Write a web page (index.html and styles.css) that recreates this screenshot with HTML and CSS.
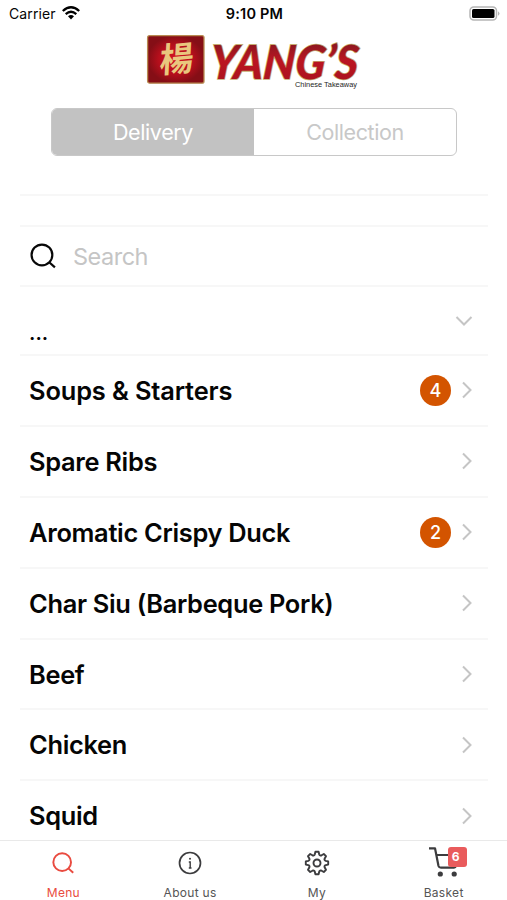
FILE: index.html
```html
<!DOCTYPE html>
<html lang="en">
<head>
<meta charset="utf-8">
<title>Yang's Chinese Takeaway</title>
<link rel="stylesheet" href="styles.css">
</head>
<body>
<svg class="defs" aria-hidden="true">
  <symbol id="chevron" viewBox="0 0 12 18"><path d="M2 1.5 9.5 9 2 16.5"/></symbol>
  <symbol id="search" viewBox="0 0 26 26"><circle cx="11.5" cy="11.5" r="10"/><path d="m18.5 18.5 5.5 5"/></symbol>
</svg>
<div class="app">
  <header class="status">
    <div class="carrier"><span>Carrier</span>
      <svg width="18" height="14" viewBox="0 0 18 14" fill="none" stroke="#000" stroke-width="2.3"><path d="M.8 5Q9-2.5 17.2 5M3.7 8.1q5.3-4.6 10.6 0"/><path d="M6 10.3q3-2.4 6 0L9 13.6z" fill="#000" stroke="none"/></svg>
    </div>
    <div class="time">9:10 PM</div>
    <div class="battery">
      <svg width="31" height="15" viewBox="0 0 31 15"><rect x="1" y="1" width="26.5" height="13" rx="3.8" fill="#fff" stroke="#b5b5b5" stroke-width="1.5"/><rect x="3" y="3" width="22.5" height="9" rx="1.6"/><path d="M29 5.2q3 2.3 0 4.6z" fill="#b5b5b5"/></svg>
    </div>
  </header>

  <div class="logo">
    <svg width="230" height="66" viewBox="0 0 230 66">
      <defs>
        <radialGradient id="red"><stop offset="0" stop-color="#d51423"/><stop offset=".6" stop-color="#b70f1c"/><stop offset="1" stop-color="#850e16"/></radialGradient>
        <linearGradient id="brand" x2="0" y2="1"><stop offset="0.2" stop-color="#8c1820"/><stop offset=".5" stop-color="#bb1522"/><stop offset="1" stop-color="#a5131e"/></linearGradient>
      </defs>
      <rect x="2.6" y="3.6" width="56.4" height="47.6" rx="2" fill="url(#red)" stroke="#b88c52" stroke-width="1.3"/>
      <text class="brand-mark" transform="translate(14 41) rotate(-5) skewX(-8)">楊</text>
      <text class="brand" transform="translate(64 46.5) skewX(-5)" textLength="148" lengthAdjust="spacingAndGlyphs">YANG’S</text>
      <text class="brand-sub" x="150" y="55.4" textLength="62" lengthAdjust="spacingAndGlyphs">Chinese Takeaway</text>
    </svg>
  </div>

  <div class="segments">
    <div class="segment selected">Delivery</div>
    <div class="segment">Collection</div>
  </div>

  <main class="content">
    <div class="spacer"></div>
    <div class="search"><svg class="search-icon"><use href="#search"/></svg><span>Search</span></div>
    <div class="more"><span>...</span><svg class="chevron down"><use href="#chevron"/></svg></div>
    <div class="row"><span class="name soups">Soups &amp; Starters</span><span class="count">4</span><svg class="chevron"><use href="#chevron"/></svg></div>
    <div class="row"><span class="name">Spare Ribs</span><svg class="chevron"><use href="#chevron"/></svg></div>
    <div class="row"><span class="name">Aromatic Crispy Duck</span><span class="count">2</span><svg class="chevron"><use href="#chevron"/></svg></div>
    <div class="row"><span class="name">Char Siu (Barbeque Pork)</span><svg class="chevron"><use href="#chevron"/></svg></div>
    <div class="row"><span class="name">Beef</span><svg class="chevron"><use href="#chevron"/></svg></div>
    <div class="row"><span class="name">Chicken</span><svg class="chevron"><use href="#chevron"/></svg></div>
    <div class="row"><span class="name">Squid</span><svg class="chevron"><use href="#chevron"/></svg></div>
  </main>

  <nav class="tabs">
    <div class="tab active"><div class="tab-icon"><svg class="tab-search"><use href="#search"/></svg></div><span>Menu</span></div>
    <div class="tab"><div class="tab-icon"><svg width="24" height="24" viewBox="-12 -12 24 24" fill="none" stroke="#3c3c3e" stroke-width="1.7"><circle r="10.5"/><path d="M-1.2-1H.2V5M-1.2 5H1.5" stroke-width="1.4"/><circle cy="-4.3" r="1" fill="#3c3c3e" stroke="none"/></svg></div><span>About us</span></div>
    <div class="tab"><div class="tab-icon"><svg width="26" height="26" viewBox="-13 -13 26 26" fill="none" stroke="#3c3c3e" stroke-width="1.9" stroke-linejoin="round"><circle r="3.5"/><path d="M11.2-1.6V1.6L8.7 2.2Q6.9 2.9 7.7 4.6L9 6.8 6.8 9 4.6 7.7Q2.9 6.9 2.2 8.7L1.6 11.2H-1.6L-2.2 8.7Q-2.9 6.9-4.6 7.7L-6.8 9-9 6.8-7.7 4.6Q-6.9 2.9-8.7 2.2L-11.2 1.6V-1.6L-8.7-2.2Q-6.9-2.9-7.7-4.6L-9-6.8-6.8-9-4.6-7.7Q-2.9-6.9-2.2-8.7L-1.6-11.2H1.6L2.2-8.7Q2.9-6.9 4.6-7.7L6.8-9 9-6.8 7.7-4.6Q6.9-2.9 8.7-2.2Z"/></svg></div><span>My</span></div>
    <div class="tab"><div class="tab-icon cart"><svg width="32" height="32" viewBox="0 0 32 32" fill="none" stroke="#3c3c3e" stroke-width="2.2" stroke-linejoin="round"><path d="M1 2.3H7L10.5 20Q11 21.7 13 21.7H26Q27.5 21.7 28 20L30 9M8.5 9H22"/><g fill="#3c3c3e" stroke="none"><circle cx="12.3" cy="28" r="2.6"/><circle cx="26.2" cy="28" r="2.6"/></g></svg><b class="badge">6</b></div><span>Basket</span></div>
  </nav>
</div>
</body>
</html>
```
FILE: styles.css
```css
* { box-sizing: border-box; }
body { margin: 0; background: #fff; font-family: Inter, "Liberation Sans", sans-serif; color: #050505; }
.defs { position: absolute; width: 0; height: 0; }
.app { width: 507px; height: 900px; display: flex; flex-direction: column; overflow: hidden; }
svg { display: block; flex: none; }

.status { height: 28px; display: grid; grid-template-columns: 1fr auto 1fr; padding: 6px 7px 0 9px; font-size: 14px; line-height: 16px; }
.carrier { display: flex; gap: 6px; letter-spacing: .1px; }
.time { font-size: 14.5px; font-weight: 600; letter-spacing: .2px; }
.battery { display: flex; justify-content: flex-end; }

.logo { height: 80px; padding: 4px 0 0 145px; }
.logo svg { overflow: visible; }
.brand { font: italic 900 47px Lato, sans-serif; fill: url(#brand); stroke: #c5ae72; stroke-width: 1.6px; paint-order: stroke; }
.brand-mark { font: 700 34px "Noto Sans CJK TC", sans-serif; fill: #e9c77e; }
.brand-sub { font: 7px "Liberation Sans", sans-serif; fill: #252525; }

.segments { width: 406px; height: 48px; margin-left: 51px; display: flex; border: 1.5px solid #c8c8c8; border-radius: 6px; overflow: hidden; flex: none; }
.segment { flex: 1; display: flex; align-items: center; justify-content: center; font-size: 21.5px; letter-spacing: -.4px; color: #c8c8c8; }
.selected { background: #c2c2c2; color: #fff; }

.content { flex: 1; min-height: 0; overflow: hidden; margin: 38px 19px 0 20px; }
.spacer { height: 31px; border-top: 2px solid #f7f7f7; }
.search { height: 62px; padding-left: 10px; display: flex; align-items: center; gap: 16px; border-top: 2px solid #f7f7f7; border-bottom: 2px solid #f7f7f7; font-size: 23.5px; letter-spacing: -.5px; color: #c5c5c5; }
.search-icon { width: 27px; height: 27px; fill: none; stroke: #080808; stroke-width: 2.1; }
.more { height: 69px; padding: 0 13px 9px 9px; display: flex; justify-content: space-between; align-items: flex-end; border-bottom: 2px solid #f7f7f7; font-size: 20px; font-weight: 600; line-height: 24px; }
.row { height: 70.9px; padding: 0 15px 0 9px; display: flex; align-items: center; border-bottom: 2px solid #f7f7f7; }
.name { flex: 1; font-size: 25.4px; font-weight: 600; letter-spacing: -.3px; white-space: nowrap; }
.soups { letter-spacing: -.13px; }
.count { width: 31px; height: 31px; margin-right: 10px; border-radius: 50%; background: #d35400; color: #fff; font-size: 18px; font-weight: 500; display: flex; align-items: center; justify-content: center; }
.chevron { width: 12px; height: 18px; fill: none; stroke: #c5c5c5; stroke-width: 2; }
.down { transform: rotate(90deg); margin: 0 5px 15px 0; }

.tabs { height: 60px; flex: none; display: grid; grid-template-columns: repeat(4, 1fr); border-top: 1px solid #e9e9e9; background: #fff; }
.tab { display: flex; flex-direction: column; align-items: center; font-size: 12px; line-height: 16px; letter-spacing: .3px; color: #555; }
.tab-icon { height: 44px; display: flex; align-items: center; }
.tab-search { width: 23px; height: 23px; fill: none; stroke: #e94b40; stroke-width: 2.2; }
.active { color: #e94b40; }
.cart { position: relative; padding-bottom: 2px; }
.badge { position: absolute; left: 20px; top: 6px; width: 19px; height: 20px; padding-right: 3px; border-radius: 3px; background: #e95b5c; color: #fff; font-size: 12px; line-height: 20px; text-align: center; letter-spacing: 0; }
```
